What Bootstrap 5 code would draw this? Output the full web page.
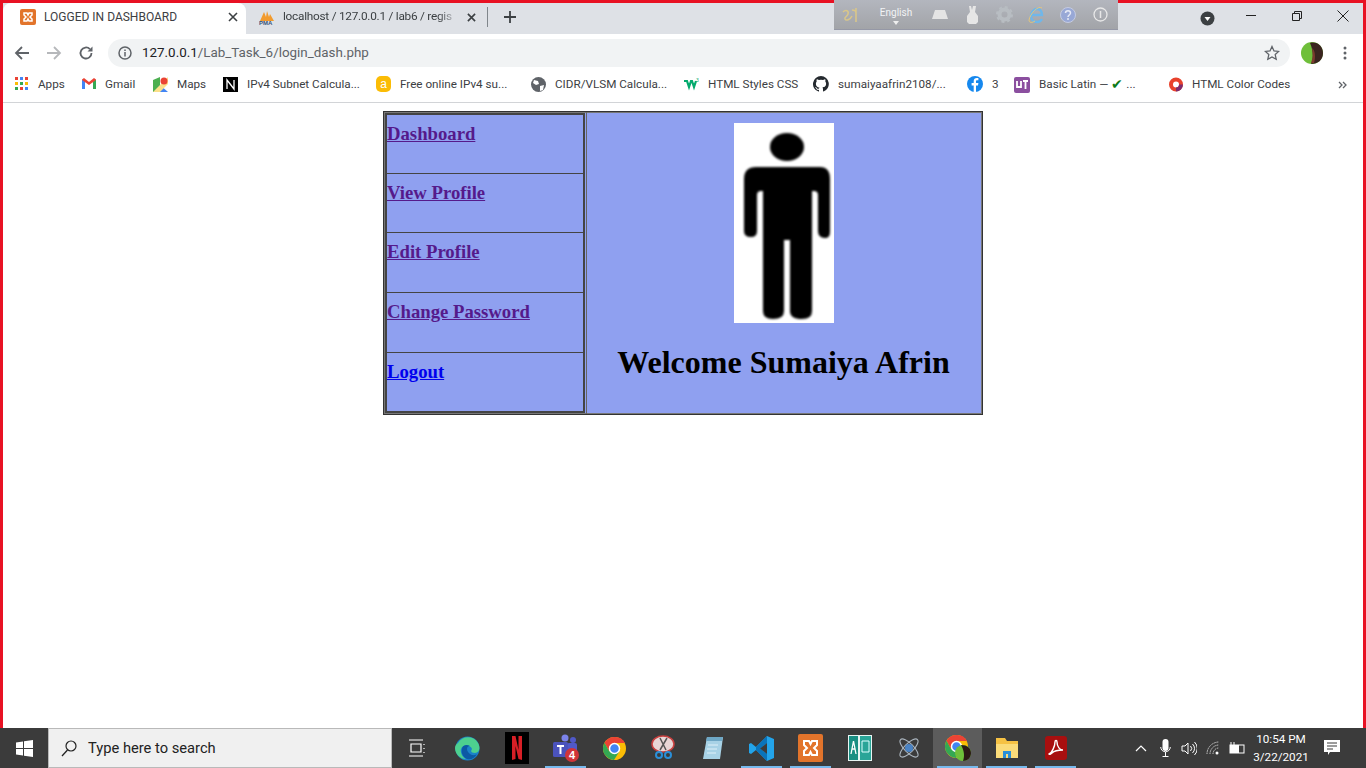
<!DOCTYPE html>
<html lang="en">
<head>
  <meta charset="UTF-8" />
  <title>LOGGED IN DASHBOARD</title>
  <link href="https://cdn.jsdelivr.net/npm/bootstrap@5.3.3/dist/css/bootstrap.min.css" rel="stylesheet" />
  <style>
    html, body { height: 768px; overflow: hidden; background: #fff; }
    body { font-family: Roboto, "Liberation Sans", sans-serif; font-size: 12px; color: #3c4043; }
    .ventana { height: 728px; border: 3px solid #e81123; border-bottom: 0; background: #fff; position: relative; }

    /* tabs */
    .tira { height: 31px; background: #dee1e6; }
    .pestana { height: 31px; width: 243px; padding: 0 8px 3px 17px; flex: none; }
    .pestana-activa { background: #fff; border-radius: 8px 8px 0 0; color: #3c4043; }
    .pestana-otra { width: 241px; padding-left: 13px; padding-right: 11px; }
    .pestana-titulo { width: 0; white-space: nowrap; overflow: hidden; font-size: 12px; }
    .titulo-corto { font-size: 11.8px; letter-spacing: -0.25px; -webkit-mask-image: linear-gradient(to right, #000 88%, transparent); mask-image: linear-gradient(to right, #000 88%, transparent); }
    .sep-tab { width: 1px; height: 20px; margin-bottom: 3px; background: #80868b; }
    .mas-tab { margin-left: 15px; margin-bottom: 3px; }
    .ctrl-cuenta { margin-left: auto; margin-right: 13px; margin-bottom: 0; }
    .ctrl-ventana { width: 46px; margin-bottom: 6px; }
    .ctrl-cierre { margin-right: -3px; }

    /* toolbar */
    .barra { height: 35px; background: #fff; padding: 3px 0 0 3px; }
    .boton-nav { width: 32px; }
    .omnibox { height: 28px; width: 1182px; margin-left: 6px; background: #f1f3f4; border-radius: 14px; padding: 0 10px 0 10px; font-size: 13.4px; color: #5f6368; }
    .omnibox b { font-weight: 400; color: #202124; }
    .url { margin-left: 10px; }
    .avatar { margin-left: 11px; }
    .puntos { margin-left: 20px; }

    /* bookmarks */
    .marcadores { height: 34px; padding-left: 12px; padding-bottom: 2px; border-bottom: 1px solid #d2d4d7; background: #fff; white-space: nowrap; font-size: 11.7px; }
    .marca { flex: none; }
    .marca svg { margin-right: 9px; flex: none; }
    .marca-check { font-size: 14px; color: #0d7a18; margin: 0 3px; }
    .m1 { width: 67px; } .m2 { width: 71px; } .m3 { width: 70px; } .m4 { width: 153px; } .m5 { width: 155px; }
    .m6 { width: 153px; } .m7 { width: 129px; } .m8 { width: 154px; } .m9 { width: 47px; } .m10 { width: 155px; } .m11 { width: 169px; }

    /* page content */
    .contenido { padding-top: 8px; }
    .tabla-exterior { width: 600px; height: 304px; border: 1px solid #333; border-collapse: separate; border-spacing: 0; background: #8fa0f0; box-shadow: inset 0 0 0 1px #777; font-family: "Liberation Serif", serif; color: #000; }
    .celda-menu { width: 203px; padding: 1px; border-right: 1px solid #666; vertical-align: top; }
    .tabla-menu { width: 200px; border: 2px solid #444; border-collapse: collapse; }
    .tabla-menu td { height: 60px; border: 1px solid #444; padding: 8px 0 0 0; vertical-align: top; }
    .tabla-menu tr:nth-child(-n+2) td { height: 59px; }
    .enlace-menu { font-size: 18.72px; font-weight: 700; line-height: 22px; }
    .enlace-visto { color: #551a8b; }
    .enlace-nuevo { color: #0000ee; }
    .celda-bienvenida { text-align: center; vertical-align: top; padding: 11px 2px 0 0; }
    .foto { display: block; margin: 0 auto; }
    .saludo { font-family: "Liberation Serif", serif; font-size: 32px; font-weight: 700; line-height: 37px; margin: 21px 0 0; color: #000; }

    /* language bar */
    .barra-idioma { position: absolute; left: 831px; top: -3px; width: 284px; height: 30px; background: linear-gradient(#b3b6be, #a2a4a8); border-bottom: 1px solid #9598a6; }
    .idioma-txt { color: #f2f3f5; font-size: 10px; width: 56px; text-align: center; position: relative; }
    .idioma-flecha { display: block; width: 0; margin: 1px auto 0; border: 3px solid transparent; border-top: 4px solid #eee; border-bottom: 0; }
    .idioma-item { width: 32px; }
    .idioma-logo { width: 34px; }

    /* taskbar */
    .tareas { height: 40px; background: #3b3b3b; }
    .inicio { width: 48px; }
    .buscador { width: 344px; height: 40px; background: #f0f0f0; border: 1px solid #b9b9b9; padding: 1px 0 0 12px; font-size: 14.7px; color: #222; }
    .buscador span { margin-left: 11px; }
    .app { width: 49px; height: 40px; flex: none; position: relative; }
    .app-primera { margin-right: 2px; }
    .app-abierta::after { content: ""; position: absolute; left: 4px; right: 4px; bottom: 0; height: 2px; background: #76b9ed; }
    .app-activa { background: #5c5c5c; }
    .bandeja { margin-left: auto; color: #fff; }
    .bandeja-icono { width: 24px; }
    .reloj { width: 58px; margin-left: 3px; margin-right: 2px; font-size: 11.7px; line-height: 18px; text-align: center; color: #fff; }
    .notif { width: 40px; margin-right: 14px; }
  </style>
</head>
<body>
  <div class="ventana">
    <div class="tira d-flex align-items-center">
      <div class="pestana pestana-activa d-flex align-items-center">
        <svg width="16" height="16" viewBox="0 0 16 16" class="me-2 flex-none"><rect width="16" height="16" rx="2" fill="#e2742b"/><path d="M4 4h3l1 2 1-2h3v2l-2 2 2 2v2H9L8 10l-1 2H4v-2l2-2-2-2z" fill="none" stroke="#fff" stroke-width="1.5"/></svg>
        <span class="pestana-titulo flex-grow-1">LOGGED IN DASHBOARD</span>
        <svg width="10" height="10" viewBox="0 0 10 10"><path d="M1 1l8 8M9 1l-8 8" stroke="#3c4043" stroke-width="1.6"/></svg>
      </div>
      <div class="pestana pestana-otra d-flex align-items-center">
        <svg width="16" height="16" viewBox="0 0 16 16" class="me-2"><path d="M1 12L5 3l2 5 1-6 2 6 1-3 4 7z" fill="#f29b2e"/><text x="0" y="16" font-size="6" font-weight="700" font-family="Liberation Sans" fill="#36537a">PMA</text></svg>
        <span class="pestana-titulo titulo-corto flex-grow-1">localhost / 127.0.0.1 / lab6 / regis</span>
        <svg width="9" height="9" viewBox="0 0 10 10" class="ms-2"><path d="M1 1l8 8M9 1l-8 8" stroke="#3c4043" stroke-width="1.8"/></svg>
      </div>
      <div class="sep-tab"></div>
      <svg class="mas-tab" width="14" height="14" viewBox="0 0 14 14"><path d="M7 1v12M1 7h12" stroke="#3c4043" stroke-width="1.8"/></svg>
      <svg class="ctrl-cuenta" width="15" height="15" viewBox="0 0 15 15"><circle cx="7.5" cy="7.5" r="7" fill="#3c4043"/><path d="M4.5 6h6l-3 4z" fill="#fff"/></svg>
      <div class="ctrl-ventana d-flex justify-content-center"><svg width="12" height="12" viewBox="0 0 12 12"><path d="M1 5.5h10" stroke="#222" stroke-width="1"/></svg></div>
      <div class="ctrl-ventana d-flex justify-content-center"><svg width="12" height="12" viewBox="0 0 12 12"><path d="M1.5 3.5h7v7h-7zM3.5 3.500v-2h7v7h-2" fill="none" stroke="#222"/></svg></div>
      <div class="ctrl-ventana ctrl-cierre d-flex justify-content-center"><svg width="12" height="12" viewBox="0 0 12 12"><path d="M.5.500l11 11M11.500.500l-11 11" stroke="#222"/></svg></div>
    </div>

    <div class="barra d-flex align-items-center">
      <div class="boton-nav d-flex justify-content-center"><svg width="16" height="16" viewBox="0 0 16 16"><path d="M15 8H2M8 2L2 8l6 6" fill="none" stroke="#5f6368" stroke-width="1.8"/></svg></div>
      <div class="boton-nav d-flex justify-content-center"><svg width="16" height="16" viewBox="0 0 16 16"><path d="M1 8h13M8 2l6 6-6 6" fill="none" stroke="#b6b8bb" stroke-width="1.8"/></svg></div>
      <div class="boton-nav d-flex justify-content-center"><svg width="16" height="16" viewBox="0 0 16 16"><path d="M13.500 8a5.500 5.500 0 1 1-1.600-3.900" fill="none" stroke="#5f6368" stroke-width="1.800"/><path d="M14.500 1.500v5h-5z" fill="#5f6368"/></svg></div>
      <div class="omnibox d-flex align-items-center">
        <svg width="14" height="14" viewBox="0 0 14 14"><circle cx="7" cy="7" r="6" fill="none" stroke="#5f6368" stroke-width="1.500"/><path d="M7 6v4.500M7 3.500v1.500" stroke="#5f6368" stroke-width="1.500"/></svg>
        <span class="url"><b>127.0.0.1</b>/Lab_Task_6/login_dash.php</span>
        <svg class="ms-auto" width="16" height="16" viewBox="0 0 16 16"><path d="M8 1.500l2 4.400 4.700.500-3.500 3.200 1 4.700L8 12l-4.200 2.300 1-4.700-3.500-3.200 4.700-.500z" fill="none" stroke="#5f6368" stroke-width="1.300"/></svg>
      </div>
      <svg class="avatar" width="22" height="22" viewBox="0 0 22 22"><circle cx="11" cy="11" r="11" fill="#6fbf3a"/><path d="M9 1c7-2 13 3 13 10s-5 11-12 11c3-6 2-14-1-21z" fill="#3a2420"/><path d="M11 6c3 2 4 9 2 15h-3c2-5 2-10 1-15z" fill="#7a3b2e"/></svg>
      <svg class="puntos" width="4" height="14" viewBox="0 0 4 14"><circle cx="2" cy="2" r="1.500" fill="#5f6368"/><circle cx="2" cy="7" r="1.500" fill="#5f6368"/><circle cx="2" cy="12" r="1.500" fill="#5f6368"/></svg>
    </div>

    <div class="marcadores d-flex align-items-center">
      <div class="marca m1 d-flex align-items-center"><svg width="14" height="14" viewBox="0 0 14 14"><g><rect width="3" height="3" fill="#ea4335"/><rect x="5" width="3" height="3" fill="#4285f4"/><rect x="10" width="3" height="3" fill="#ea4335"/><rect y="5" width="3" height="3" fill="#fbbc05"/><rect x="5" y="5" width="3" height="3" fill="#34a853"/><rect x="10" y="5" width="3" height="3" fill="#fbbc05"/><rect y="10" width="3" height="3" fill="#34a853"/><rect x="5" y="10" width="3" height="3" fill="#ea4335"/><rect x="10" y="10" width="3" height="3" fill="#4285f4"/></g></svg>Apps</div>
      <div class="marca m2 d-flex align-items-center"><svg width="14" height="14" viewBox="0 0 14 14"><path d="M0 3h3v9H0z" fill="#4285f4"/><path d="M11 3h3v9h-3z" fill="#34a853"/><path d="M0 3l7 5 7-5v-.5L12 1 7 5 2 1 0 2.500z" fill="#ea4335"/></svg>Gmail</div>
      <div class="marca m3 d-flex align-items-center"><svg width="15" height="15" viewBox="0 0 15 15"><path d="M0 3l7-3v15H0z" fill="#4caf50"/><path d="M7 8l8 7H2z" fill="#4285f4"/><path d="M0 15l15-15v7L7 15z" fill="#fbe08a"/><circle cx="11" cy="4" r="3.500" fill="#ea4335"/></svg>Maps</div>
      <div class="marca m4 d-flex align-items-center"><svg width="15" height="15" viewBox="0 0 15 15"><rect width="15" height="15" fill="#000"/><path d="M4 12V3l7 9V3" fill="none" stroke="#fff" stroke-width="1.300"/></svg>IPv4 Subnet Calcula...</div>
      <div class="marca m5 d-flex align-items-center"><svg width="15" height="16" viewBox="0 0 15 16"><rect width="15" height="16" rx="5" fill="#fbbc05"/><text x="7.500" y="12" font-size="12" text-anchor="middle" font-family="Liberation Sans" fill="#fff">a</text></svg>Free online IPv4 su...</div>
      <div class="marca m6 d-flex align-items-center"><svg width="15" height="15" viewBox="0 0 15 15"><circle cx="7.500" cy="7.500" r="7.500" fill="#5f6368"/><path d="M3 3l4 1 1 3-3 1-3-2zM9 9l4-1-1 5-3 1z" fill="#fff"/></svg>CIDR/VLSM Calcula...</div>
      <div class="marca m7 d-flex align-items-center"><svg width="15" height="13" viewBox="0 0 15 13"><path d="M0 3h3l2 6 2-6h1l2 6 2-6" fill="none" stroke="#04aa6d" stroke-width="2.200"/><text x="12" y="4" font-size="5" fill="#04aa6d" font-family="Liberation Sans">3</text></svg>HTML Styles CSS</div>
      <div class="marca m8 d-flex align-items-center"><svg width="16" height="16" viewBox="0 0 16 16"><path fill="#24292e" d="M8 0a8 8 0 0 0-2.500 15.600c.4.100.5-.2.500-.4v-1.400c-2.200.5-2.700-1-2.700-1-.4-.9-.9-1.200-.9-1.200-.7-.5.100-.5.100-.5.800.1 1.200.8 1.200.8.700 1.200 1.900.9 2.300.7.100-.5.300-.9.500-1.100-1.800-.2-3.600-.9-3.600-4 0-.9.300-1.600.8-2.100-.1-.2-.4-1 .1-2.100 0 0 .7-.2 2.200.8a7.600 7.600 0 0 1 4 0c1.500-1 2.200-.8 2.200-.8.400 1.100.2 1.900.1 2.100.5.600.8 1.300.8 2.100 0 3.100-1.900 3.700-3.700 3.900.3.300.6.800.6 1.500v2.200c0 .2.100.5.600.4A8 8 0 0 0 8 0z"/></svg>sumaiyaafrin2108/...</div>
      <div class="marca m9 d-flex align-items-center"><svg width="16" height="16" viewBox="0 0 16 16"><circle cx="8" cy="8" r="8" fill="#1688ee"/><path d="M9 16V9.500h2l.4-2.500H9V5.500c0-.8.300-1.200 1.200-1.200h1.200V2.100C11 2 10.400 2 9.800 2 8 2 6.700 3 6.700 5.200V7H4.600v2.500h2.100V16z" fill="#fff"/></svg>3</div>
      <div class="marca m10 d-flex align-items-center"><svg width="16" height="16" viewBox="0 0 16 16"><rect width="16" height="16" rx="2" fill="#8b4f9f"/><path d="M3 4v6h4V4M9 4h5M11.500 4v8" fill="none" stroke="#fff" stroke-width="1.800"/></svg>Basic Latin —<span class="marca-check">✔</span>...</div>
      <div class="marca m11 d-flex align-items-center"><svg width="14" height="15" viewBox="0 0 14 15"><circle cx="7" cy="7.500" r="5" fill="none" stroke="#e8422c" stroke-width="4"/><path d="M7 12.500A5 5 0 0 0 12 7.500" fill="none" stroke="#7d2c6e" stroke-width="4"/></svg>HTML Color Codes</div>
      <svg width="9" height="8" viewBox="0 0 9 8"><path d="M1 1l3 3-3 3M5 1l3 3-3 3" fill="none" stroke="#5f6368" stroke-width="1.300"/></svg>
    </div>

    <div class="contenido d-flex justify-content-center">
      <table class="tabla-exterior">
        <tr>
          <td class="celda-menu">
            <table class="tabla-menu">
              <tr><td><a href="#" class="enlace-menu enlace-visto">Dashboard</a></td></tr>
              <tr><td><a href="#" class="enlace-menu enlace-visto">View Profile</a></td></tr>
              <tr><td><a href="#" class="enlace-menu enlace-visto">Edit Profile</a></td></tr>
              <tr><td><a href="#" class="enlace-menu enlace-visto">Change Password</a></td></tr>
              <tr><td><a href="#" class="enlace-menu enlace-nuevo">Logout</a></td></tr>
            </table>
          </td>
          <td class="celda-bienvenida">
            <svg class="foto" width="100" height="200" viewBox="0 0 100 200">
              <defs><filter id="suave"><feGaussianBlur stdDeviation="0.8"/></filter></defs>
              <rect width="100" height="200" fill="#fff"/>
              <g filter="url(#suave)">
                <ellipse cx="53" cy="24" rx="17" ry="14"/>
                <path d="M22 44H86Q96 44 96 56V109Q96 115 91 115Q84 115 84 108V72Q84 68 80 68H78V188Q78 196 68 196Q56 196 56 188V117H50V188Q50 196 39 196Q29 196 29 188V68H27Q23 68 23 72V108Q23 114 17 114Q10 114 10 108V56Q10 44 22 44Z"/>
              </g>
            </svg>
            <h1 class="saludo">Welcome Sumaiya Afrin</h1>
          </td>
        </tr>
      </table>
    </div>

    <div class="barra-idioma d-flex align-items-center">
      <div class="idioma-logo d-flex justify-content-center"><svg width="18" height="16" viewBox="0 0 18 16"><path d="M1 5c3-3 6-1 5 2S2 10 3 12s5 1 7-3M10 3c2 0 4 1 4 3M14 1v14" fill="none" stroke="#d9c68a" stroke-width="1.600"/></svg></div>
      <div class="idioma-txt">English<span class="idioma-flecha"></span></div>
      <div class="idioma-item d-flex justify-content-center"><svg width="16" height="9" viewBox="0 0 16 9"><path d="M3 0h10l3 9H0z" fill="#e4e4e4"/></svg></div>
      <div class="idioma-item d-flex justify-content-center"><svg width="13" height="18" viewBox="0 0 13 18"><path d="M3 0h2l1 4 1-4h3l-1 6 3 4v6l-2 2H3l-2-2v-6l3-4z" fill="#e6e6e6"/></svg></div>
      <div class="idioma-item d-flex justify-content-center"><svg width="17" height="17" viewBox="0 0 17 17"><circle cx="8.500" cy="8.500" r="5" fill="none" stroke="#b8bdc2" stroke-width="4"/><circle cx="8.500" cy="8.500" r="7.500" fill="none" stroke="#b8bdc2" stroke-width="2" stroke-dasharray="3 2.900"/></svg></div>
      <div class="idioma-item d-flex justify-content-center"><svg width="17" height="18" viewBox="0 0 17 18"><path d="M3 9h11c0-4-2-6-5-6S3 6 3 10s3 6 6 6 4-1 5-3" fill="none" stroke="#6fb7ea" stroke-width="2.400"/><path d="M14 2C10-1 2 8 1 14c0 3 3 3 6 1" fill="none" stroke="#e3c67c" stroke-width="1"/></svg></div>
      <div class="idioma-item d-flex justify-content-center"><svg width="16" height="16" viewBox="0 0 16 16"><circle cx="8" cy="8" r="7.500" fill="#98a8d6" stroke="#c5cbe0"/><path d="M5.500 6c0-3 5-3 5 0 0 2-2.500 2-2.500 4M8 11v2" fill="none" stroke="#e6e9f5" stroke-width="1.500"/></svg></div>
      <div class="idioma-item d-flex justify-content-center"><svg width="15" height="15" viewBox="0 0 15 15"><circle cx="7.500" cy="7.500" r="6.500" fill="none" stroke="#e8e8e8" stroke-width="1.300"/><path d="M7.500 4v7" stroke="#e8e8e8" stroke-width="1.500"/></svg></div>
    </div>
  </div>

  <div class="tareas d-flex align-items-center">
    <div class="inicio d-flex justify-content-center"><svg width="17" height="17" viewBox="0 0 17 17"><path d="M0 2.500l7-1V8H0zM8 1.300L17 0v8H8zM0 9h7v6.500l-7-1zM8 9h9v8l-9-1.300z" fill="#fff"/></svg></div>
    <div class="buscador d-flex align-items-center">
      <svg width="16" height="17" viewBox="0 0 16 17"><circle cx="10" cy="6" r="5" fill="none" stroke="#222" stroke-width="1.200"/><path d="M6.500 10L1 16" stroke="#222" stroke-width="1.300"/></svg>
      <span>Type here to search</span>
    </div>
    <div class="app app-primera d-flex align-items-center justify-content-center"><svg width="16" height="18" viewBox="0 0 16 18"><path d="M0 1h14M2 5h10v8H2zM0 17h14M15 5v1M15 9v1M15 13v1" fill="none" stroke="#fff" stroke-width="1.200"/></svg></div>
    <div class="app d-flex align-items-center justify-content-center"><svg width="25" height="25" viewBox="0 0 25 25"><circle cx="12.500" cy="12.500" r="12" fill="#1b82c9"/><path d="M3 7C7 0 18-1 23 7c3 5 1 10-3 10-3 0-5-1-3-4-1-4-9-5-11 0-1 3 1 8 5 10-6 0-11-5-11-11 0-2 1-4 3-5z" fill="#4dd08f"/><path d="M7 13c0-4 5-5 8-3-4 0-4 5 0 8 3 2 6 1 7 0-2 4-6 6-10 5-4-2-6-6-5-10z" fill="#0c59a4"/></svg></div>
    <div class="app d-flex align-items-center justify-content-center"><svg width="24" height="32" viewBox="0 0 24 32"><rect width="24" height="32" fill="#000"/><path d="M7 4h3.500l3 14V4H17v24l-3.500-1-3-13v13L7 28z" fill="#d81f26"/></svg></div>
    <div class="app app-abierta d-flex align-items-center justify-content-center"><svg width="26" height="28" viewBox="0 0 26 28"><circle cx="12" cy="4" r="3.500" fill="#7b83eb"/><circle cx="20" cy="6" r="3" fill="#5059c9"/><rect x="14" y="9" width="10" height="11" rx="2" fill="#5059c9"/><rect y="8" width="15" height="15" rx="1.500" fill="#4b53bc"/><path d="M4 12h7M7.500 12v8" stroke="#fff" stroke-width="2"/><circle cx="19" cy="21" r="7" fill="#d13438"/><text x="19" y="25" font-size="11" font-weight="700" text-anchor="middle" font-family="Liberation Sans" fill="#fff">4</text></svg></div>
    <div class="app d-flex align-items-center justify-content-center"><svg width="23" height="23" viewBox="0 0 23 23"><circle cx="11.500" cy="11.500" r="11.500" fill="#fbbc05"/><path d="M11.500 0A11.500 11.500 0 0 0 1.500 5.800L6 14l5.500-8H22A11.500 11.500 0 0 0 11.500 0z" fill="#ea4335"/><path d="M1.500 5.800A11.500 11.500 0 0 0 11 23l5-8-10-1z" fill="#34a853"/><circle cx="11.500" cy="11.500" r="5" fill="#4285f4" stroke="#fff" stroke-width="1.500"/></svg></div>
    <div class="app d-flex align-items-center justify-content-center"><svg width="26" height="26" viewBox="0 0 26 26"><ellipse cx="12" cy="9" rx="11" ry="8" fill="#e8d6d6" stroke="#c9403f" stroke-width="1.500"/><path d="M9 3l6 12M16 3l-7 12" stroke="#555" stroke-width="1.500"/><circle cx="8" cy="20" r="3" fill="none" stroke="#2a8fd8" stroke-width="2"/><circle cx="17" cy="20" r="3" fill="none" stroke="#2a8fd8" stroke-width="2"/></svg></div>
    <div class="app d-flex align-items-center justify-content-center"><svg width="22" height="24" viewBox="0 0 22 24"><path d="M5 1h16l-3 22H1z" fill="#a8d2e6"/><path d="M5 1h16l-1 4H4z" fill="#6ea7c5"/><path d="M6 9h10M5 13h10M5 17h9" stroke="#dff0f8"/></svg></div>
    <div class="app app-abierta d-flex align-items-center justify-content-center"><svg width="25" height="25" viewBox="0 0 25 25"><path d="M18 0l7 3v19l-7 3L7 14l-5 4-2-1V8l2-1 5 4z" fill="#23a4ea"/><path d="M18 0v25l-11-11v-3zM18 7l-7 5.500 7 5.500z" fill="#0a74bb"/><path d="M18 7l-7 5.500 7 5.500z" fill="#3b3b3b"/></svg></div>
    <div class="app app-abierta d-flex align-items-center justify-content-center"><svg width="25" height="28" viewBox="0 0 25 28"><rect width="25" height="28" rx="2" fill="#e2742b"/><path d="M6 7h5l1.500 3L14 7h5v4l-3 3 3 3v4h-5l-1.500-3L11 21H6v-4l3-3-3-3z" fill="none" stroke="#fff" stroke-width="2"/></svg></div>
    <div class="app d-flex align-items-center justify-content-center"><svg width="24" height="26" viewBox="0 0 24 26"><rect width="24" height="26" fill="#e9f5f3"/><rect x="1" y="1" width="9" height="24" fill="#1a8f83"/><rect x="12" y="1" width="11" height="24" fill="#2aa598"/><path d="M3 19l2.500-13L8 19M4 14h3" fill="none" stroke="#fff" stroke-width="1.300"/><path d="M14 6h7v11h-7z" fill="none" stroke="#dff" stroke-width="1"/></svg></div>
    <div class="app d-flex align-items-center justify-content-center"><svg width="24" height="24" viewBox="0 0 24 24"><g fill="none" stroke="#aab4bd" stroke-width="1.100"><ellipse cx="12" cy="12" rx="12" ry="4.500" transform="rotate(45 12 12)"/><ellipse cx="12" cy="12" rx="12" ry="4.500" transform="rotate(-45 12 12)"/></g><circle cx="12" cy="12" r="4" fill="#4a83c4"/></svg></div>
    <div class="app app-abierta app-activa d-flex align-items-center justify-content-center"><svg width="26" height="26" viewBox="0 0 26 26"><circle cx="11.500" cy="11.500" r="11.500" fill="#fbbc05"/><path d="M11.500 0A11.500 11.500 0 0 0 1.500 5.800L6 14l5.500-8H22A11.500 11.500 0 0 0 11.500 0z" fill="#ea4335"/><path d="M1.500 5.800A11.500 11.500 0 0 0 11 23l5-8-10-1z" fill="#34a853"/><circle cx="11.500" cy="11.500" r="5" fill="#4285f4" stroke="#fff" stroke-width="1.500"/><circle cx="18" cy="18" r="8" fill="#6fbf3a"/><path d="M16 10c6 0 10 3 10 8s-4 8-8 8c2-5 1-11-2-16z" fill="#2c1a16"/></svg></div>
    <div class="app app-abierta d-flex align-items-center justify-content-center"><svg width="22" height="20" viewBox="0 0 22 20"><path d="M0 0h9l2 3h11v17H0z" fill="#f6c244"/><path d="M0 6h22v14H0z" fill="#fbdc7a"/><path d="M7 20v-7h8v7h-3v-4h-2v4z" fill="#2a8fd8"/></svg></div>
    <div class="app app-abierta d-flex align-items-center justify-content-center"><svg width="22" height="24" viewBox="0 0 22 24"><rect width="22" height="24" rx="3" fill="#a80f0f"/><path d="M4 18c3-1 6-8 6-12 0-2 2-2 2 0 0 5 3 8 6 8-3 0-9 1-11 3-1 1-3 2-3 1z" fill="none" stroke="#fff" stroke-width="1.400"/></svg></div>
    <div class="bandeja d-flex align-items-center">
      <div class="bandeja-icono d-flex justify-content-center"><svg width="12" height="8" viewBox="0 0 12 8"><path d="M1 7l5-5 5 5" fill="none" stroke="#fff" stroke-width="1.200"/></svg></div>
      <div class="bandeja-icono d-flex justify-content-center"><svg width="11" height="18" viewBox="0 0 11 18"><rect x="2.500" width="6" height="12" rx="3" fill="#fff"/><path d="M.7 8a4.800 4.800 0 0 0 9.600 0M5.500 13v4M2.500 17.500h6" fill="none" stroke="#fff"/></svg></div>
      <div class="bandeja-icono d-flex justify-content-center"><svg width="16" height="15" viewBox="0 0 16 15"><path d="M1 5h3l3-3v11l-3-3H1zM9.500 5a3.500 3.500 0 0 1 0 5M11.500 3a6 6 0 0 1 0 9M13.500 1a9 9 0 0 1 0 13" fill="none" stroke="#fff"/></svg></div>
      <div class="bandeja-icono d-flex justify-content-center"><svg width="15" height="14" viewBox="0 0 15 14"><path d="M1 13a12 12 0 0 1 12-12M4 13a9 9 0 0 1 9-9M7 13a6 6 0 0 1 6-6" fill="none" stroke="#ccc" stroke-dasharray="1.500 .8"/><circle cx="11" cy="12" r="1.500" fill="#fff"/></svg></div>
      <div class="bandeja-icono d-flex justify-content-center"><svg width="16" height="12" viewBox="0 0 16 12"><path d="M2 0v3M5 0v3" stroke="#fff"/><rect x="1" y="3" width="14" height="8" fill="none" stroke="#fff"/><rect x="1" y="3" width="9" height="8" fill="#fff"/></svg></div>
      <div class="reloj">10:54 PM<br />3/22/2021</div>
      <div class="notif d-flex justify-content-center"><svg width="16" height="16" viewBox="0 0 16 16"><path d="M0 0h16v12H6l-2 3v-3H0z" fill="#fff"/><path d="M3 3h10M3 6h10M3 9h6" stroke="#3b3b3b"/></svg></div>
    </div>
  </div>
  <script src="https://cdn.jsdelivr.net/npm/bootstrap@5.3.3/dist/js/bootstrap.bundle.min.js"></script>
</body>
</html>
